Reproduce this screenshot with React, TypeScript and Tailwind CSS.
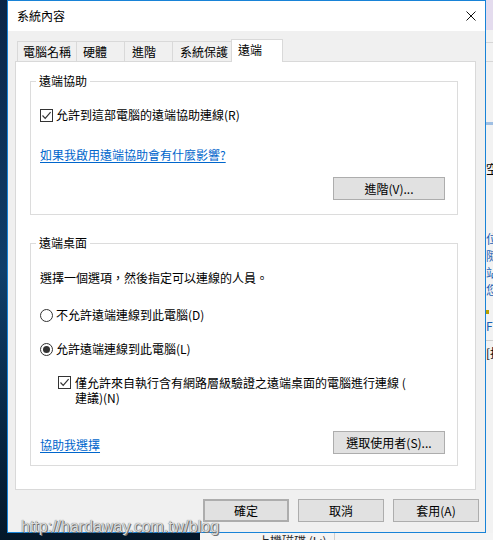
import clsx from "clsx";

const cjk = "font-['Noto_Sans_CJK_TC','Noto_Sans_CJK_SC',sans-serif]";

function CheckBox({ className }: { className?: string }) {
  return (
    <span
      className={clsx(
        "flex h-[13px] w-[13px] shrink-0 items-center justify-center border border-[#333] bg-white",
        className
      )}
    >
      <svg width="11" height="11" viewBox="0 0 11 11">
        <path d="M1.5 5.5 L4.2 8.3 L9.6 2.2" fill="none" stroke="#333" strokeWidth="1.2" />
      </svg>
    </span>
  );
}

function Radio({ checked }: { checked?: boolean }) {
  return (
    <span className="flex h-[13px] w-[13px] shrink-0 items-center justify-center rounded-full border border-[#333] bg-white">
      {checked && <span className="h-[7px] w-[7px] rounded-full bg-[#333]" />}
    </span>
  );
}

const Button: React.FC<{ children: React.ReactNode; className?: string }> = ({ children, className }) => (
  <button
    className={clsx(
      "flex h-[23px] items-center justify-center border border-[#adadad] bg-[#e1e1e1] text-[12px] leading-none text-black",
      className
    )}
  >
    {children}
  </button>
);

function GroupLabel({ children }: { children: React.ReactNode }) {
  return <div className="-ml-[4px] -mt-[8px] w-fit bg-white px-[3px] leading-[14px]">{children}</div>;
}

export default function App() {
  return (
    <div
      className={clsx(
        "relative h-[540px] w-[493px] overflow-hidden bg-gradient-to-b from-[#0b2546] via-[#0f3e6a] to-[#041729] text-[12px] text-black",
        cjk
      )}
    >
      {/* window behind, right edge */}
      <div className="absolute left-[486px] top-0 flex h-[540px] w-[7px] flex-col overflow-hidden bg-[#f2f2f2]">
        <div className="h-[30px] bg-[#e4dcee]" />
        <div className="mt-[12px] h-px bg-[#d6d6d6]" />
        <div className="mt-[18px] h-px bg-[#d6d6d6]" />
        <div className="mt-[60px] h-[3px] bg-[#9fbfe3]" />
        <div className="mt-[38px] h-[12px] text-[12px] leading-[12px]">空</div>
        <div className="mt-[55px] flex flex-col text-[12px] leading-[17px] text-[#1a5fb4]">
          <span>位</span>
          <span>隨</span>
          <span>站</span>
          <span>您</span>
        </div>
        <div className="mt-[12px] h-[4px] w-[3px] bg-[#b8a000]" />
        <div className="mt-[6px] text-[12px] leading-[12px] text-[#1a5fb4]">F</div>
        <div className="mt-[8px] h-px bg-[#cfcfcf]" />
        <div className="mt-[6px] text-[12px] leading-[12px]">[找</div>
      </div>

      {/* window behind, bottom */}
      <div className="absolute left-[200px] top-[533px] flex h-[7px] w-[293px] overflow-hidden bg-[#f4f4f4]">
        <div className="w-[135px] border-r border-[#cfcfcf] pl-[58px] pt-[2px] text-[12px] leading-[12px] text-[#222]">
          上機磁碟 (L:)
        </div>
      </div>

      {/* dialog */}
      <div className="absolute left-[7px] top-0 flex h-[533px] w-[479px] flex-col border border-[#1883d7] bg-[#f0f0f0]">
        <div className="flex h-[30px] shrink-0 items-center bg-white pl-[9px]">
          <span className="leading-[14px]">系統內容</span>
          <svg className="ml-auto mr-[9px]" width="10" height="10" viewBox="0 0 10 10">
            <path d="M0.5 0.5 L9.5 9.5 M9.5 0.5 L0.5 9.5" stroke="#111" strokeWidth="1" />
          </svg>
        </div>

        <div className="flex flex-col pl-[7px] pt-[8px]">
          <div className="flex h-[22px] items-end pl-[2px]">
            <div className="flex h-[20px] w-[60px] items-center border border-b-0 border-[#d9d9d9] bg-[#f0f0f0] pl-[5px] leading-[14px]">
              電腦名稱
            </div>
            <div className="-ml-px flex h-[20px] w-[49px] items-center border border-b-0 border-[#d9d9d9] bg-[#f0f0f0] pl-[6px] leading-[14px]">
              硬體
            </div>
            <div className="-ml-px flex h-[20px] w-[49px] items-center border border-b-0 border-[#d9d9d9] bg-[#f0f0f0] pl-[7px] leading-[14px]">
              進階
            </div>
            <div className="-ml-px flex h-[20px] w-[60px] items-center border border-b-0 border-[#d9d9d9] bg-[#f0f0f0] pl-[7px] leading-[14px]">
              系統保護
            </div>
            <div className="relative z-10 -mb-px -ml-px flex h-[23px] w-[52px] items-start border border-b-0 border-[#d9d9d9] bg-white pl-[6px] pt-[3px] leading-[14px]">
              遠端
            </div>
          </div>

          <div className="flex h-[429px] w-[461px] flex-col border border-[#d9d9d9] bg-white pl-[14px]">
            {/* 遠端協助 */}
            <div className="mt-[19px] flex w-[428px] flex-col border border-[#dcdcdc] pb-[14px] pl-[9px] pr-[12px]">
              <GroupLabel>遠端協助</GroupLabel>
              <div className="mt-[20px] flex h-[14px] items-center gap-[3px] leading-[14px]">
                <CheckBox />
                <span>允許到這部電腦的遠端協助連線(R)</span>
              </div>
              <a className="mt-[26px] w-fit leading-[14px] text-[#0066cc] underline underline-offset-2">
                如果我啟用遠端協助會有什麼影響?
              </a>
              <Button className="mt-[15px] w-[112px] self-end">進階(V)...</Button>
            </div>

            {/* 遠端桌面 */}
            <div className="mt-[28px] flex w-[428px] flex-col border border-[#dcdcdc] pb-[11px] pl-[9px] pr-[12px]">
              <GroupLabel>遠端桌面</GroupLabel>
              <div className="mt-[21px] leading-[14px]">選擇一個選項，然後指定可以連線的人員。</div>
              <div className="mt-[23px] flex h-[14px] items-center gap-[3px] leading-[14px]">
                <Radio />
                <span>不允許遠端連線到此電腦(D)</span>
              </div>
              <div className="mt-[20px] flex h-[14px] items-center gap-[3px] leading-[14px]">
                <Radio checked />
                <span>允許遠端連線到此電腦(L)</span>
              </div>
              <div className="ml-[18px] mt-[19px] flex items-start gap-[4px] leading-[15px]">
                <CheckBox className="mt-px" />
                <span>
                  僅允許來自執行含有網路層級驗證之遠端桌面的電腦進行連線 (
                  <br />
                  建議)(N)
                </span>
              </div>
              <div className="mt-[26px] flex items-center justify-between">
                <a className="mt-[5px] leading-[14px] text-[#0066cc] underline underline-offset-2">協助我選擇</a>
                <Button className="w-[112px]">選取使用者(S)...</Button>
              </div>
            </div>
          </div>
        </div>

        <div className="flex justify-end gap-[9px] pr-[6px] pt-[9px]">
          <Button className="w-[86px] border-2 border-[#0078d7]">確定</Button>
          <Button className="w-[86px]">取消</Button>
          <Button className="w-[86px]">套用(A)</Button>
        </div>
      </div>

      {/* watermark */}
      <div className="absolute left-[21px] top-[518px] font-['Liberation_Sans',sans-serif] text-[16px] leading-[18px] text-[#dadada] [text-shadow:0_0_1px_#555,1px_1px_0_#777]">
        http://hardaway.com.tw/blog
      </div>
    </div>
  );
}
